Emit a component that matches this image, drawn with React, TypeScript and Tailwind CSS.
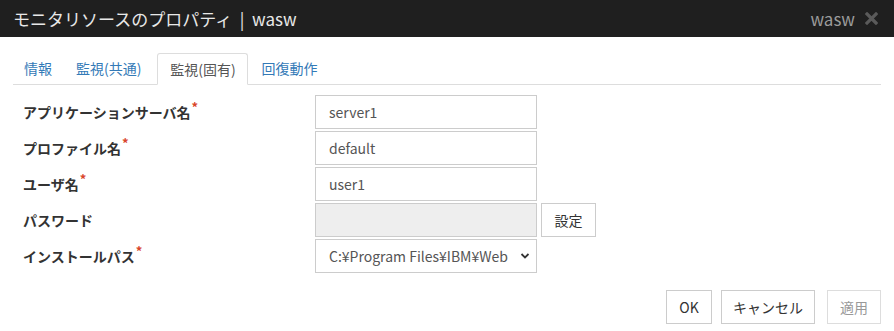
import React from "react";

const font = { fontFamily: '"Noto Sans CJK JP", "Noto Sans", sans-serif' };

function Label({ text, req }: { text: string; req?: boolean }) {
  return (
    <div className="flex items-center h-[34px] pl-[10px] text-[14px] font-bold text-[#333]">
      <span>{text}</span>
      {req && <span className="text-[#d9452b] text-[13px] relative -top-[5px] ml-[1px] font-bold">*</span>}
    </div>
  );
}

function Input({ value, disabled }: { value: string; disabled?: boolean }) {
  return (
    <div
      className={`w-[222px] h-[34px] border border-[#ccc] flex items-center pl-[13px] text-[14px] text-[#555] ${
        disabled ? "bg-[#eeeeee]" : "bg-white"
      }`}
    >
      {value}
    </div>
  );
}

export default function App() {
  return (
    <div className="w-[894px] h-[331px] bg-white overflow-hidden" style={font}>
      <div className="h-[37px] bg-[#1f1f1f] flex items-center justify-between px-[13px]">
        <div className="text-[17px] text-[#e8e8e8] whitespace-pre">モニタリソースのプロパティ  |  wasw</div>
        <div className="flex items-center gap-[10px]">
          <span className="text-[17px] text-[#9b9b9b]">wasw</span>
          <svg width="13" height="13" viewBox="0 0 13 13" className="mr-[3px]">
            <path d="M2 2 L11 11 M11 2 L2 11" stroke="#5a5a5a" strokeWidth="3.2" strokeLinecap="square" />
          </svg>
        </div>
      </div>
      <div className="px-[13px]">
        <div className="mt-[16px] flex border-b border-[#ddd] h-[32px] text-[14px]">
          <div className="px-[11px] mr-[2px] flex items-center text-[#337ab7]">情報</div>
          <div className="px-[11px] mr-[5px] flex items-center text-[#337ab7]">監視(共通)</div>
          <div className="w-[91px] justify-center flex items-center text-[#555] border border-[#ddd] border-b-white bg-white rounded-t-[3px] -mb-[1px] h-[32px]">
            監視(固有)
          </div>
          <div className="pl-[13px] flex items-center text-[#337ab7]">回復動作</div>
        </div>
        <div className="mt-[10px] grid grid-cols-[302px_auto] gap-y-[2px]">
          <Label text="アプリケーションサーバ名" req />
          <Input value="server1" />
          <Label text="プロファイル名" req />
          <Input value="default" />
          <Label text="ユーザ名" req />
          <Input value="user1" />
          <Label text="パスワード" />
          <div className="flex">
            <Input value="" disabled />
            <button className="ml-[4px] w-[55px] h-[34px] border border-[#ccc] bg-white text-[14px] text-[#333]">設定</button>
          </div>
          <Label text="インストールパス" req />
          <div className="w-[222px] h-[34px] border border-[#ccc] flex items-center pl-[13px] pr-[6px] text-[14px] text-[#555] bg-white">
            <span className="whitespace-nowrap overflow-hidden flex-1">C:¥Program Files¥IBM¥Web</span>
            <svg width="10" height="8" viewBox="0 0 10 8" className="ml-[2px]">
              <path d="M1.5 2 L5 5.5 L8.5 2" stroke="#333" strokeWidth="1.8" fill="none" />
            </svg>
          </div>
        </div>
        <div className="flex justify-end mt-[17px]">
          <button className="w-[46px] h-[34px] border border-[#ccc] bg-white text-[14px] text-[#333] mr-[9px]">OK</button>
          <button className="w-[94px] h-[34px] border border-[#ccc] bg-white text-[14px] text-[#333] mr-[12px]">キャンセル</button>
          <button className="w-[54px] h-[34px] border border-[#ddd] bg-white text-[14px] text-[#999]">適用</button>
        </div>
      </div>
    </div>
  );
}
